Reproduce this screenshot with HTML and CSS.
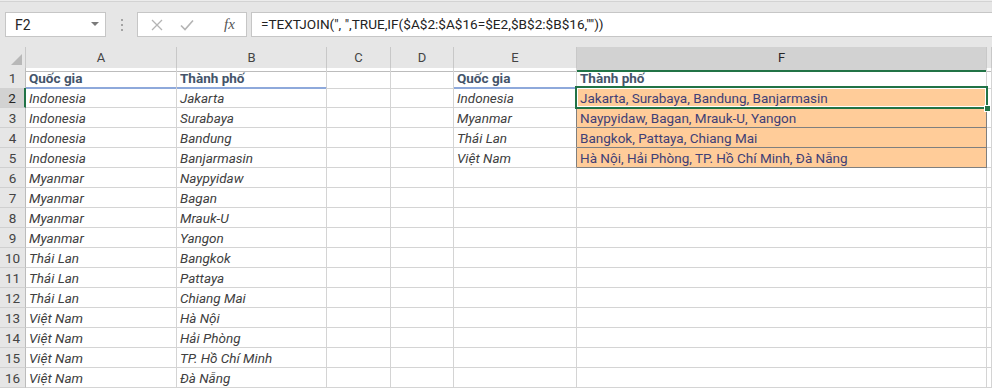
FILE: index.html
```html
<!DOCTYPE html>
<html lang="vi">
<head>
  <meta charset="UTF-8">
  <title>TEXTJOIN - Quốc gia / Thành phố</title>
  <link rel="stylesheet" href="styles.css">
</head>
<body>
  <div class="formula-bar">
    <div class="name-box">
      <span>F2</span>
      <svg class="caret" width="8" height="5" viewBox="0 0 8 5"><path d="M0 0h8L4 4z" fill="#7a7a7a"/></svg>
    </div>
    <div class="grip">
      <svg width="4" height="12" viewBox="0 0 4 12"><rect x="1" y="0" width="2" height="2" fill="#a3a3a3"/><rect x="1" y="5" width="2" height="2" fill="#a3a3a3"/><rect x="1" y="10" width="2" height="2" fill="#a3a3a3"/></svg>
    </div>
    <div class="fx-buttons">
      <svg width="12" height="12" viewBox="0 0 12 12"><path d="M1 1l10 10M11 1L1 11" stroke="#b4b4b4" stroke-width="1.3"/></svg>
      <svg width="14" height="12" viewBox="0 0 14 12"><path d="M1 6.5l4 4L13 1.5" stroke="#b4b4b4" stroke-width="1.6" fill="none"/></svg>
      <span class="fx">fx</span>
    </div>
    <div class="formula">=TEXTJOIN(", ",TRUE,IF($A$2:$A$16=$E2,$B$2:$B$16,""))</div>
  </div>

  <div class="sheet">
    <div class="row head-row">
      <div class="corner">
        <svg width="25" height="20" viewBox="0 0 25 20"><path d="M22 7v11H11z" fill="#b8b8b8"/></svg>
      </div>
      <div class="col-h">A</div>
      <div class="col-h">B</div>
      <div class="col-h">C</div>
      <div class="col-h">D</div>
      <div class="col-h">E</div>
      <div class="col-h active">F</div>
      <div class="col-h"></div>
    </div>

    <div class="row">
      <div class="row-h">1</div>
      <div class="cell heading line">Quốc gia</div>
      <div class="cell heading line">Thành phố</div>
      <div class="cell"></div>
      <div class="cell"></div>
      <div class="cell heading line">Quốc gia</div>
      <div class="cell heading top-input">Thành phố</div>
      <div class="cell"></div>
    </div>

    <div class="row">
      <div class="row-h active">2</div>
      <div class="cell note">Indonesia</div>
      <div class="cell note">Jakarta</div>
      <div class="cell"></div>
      <div class="cell"></div>
      <div class="cell note before-input">Indonesia</div>
      <div class="cell input selected">Jakarta, Surabaya, Bandung, Banjarmasin</div>
      <div class="cell"></div>
    </div>

    <div class="row">
      <div class="row-h">3</div>
      <div class="cell note">Indonesia</div>
      <div class="cell note">Surabaya</div>
      <div class="cell"></div>
      <div class="cell"></div>
      <div class="cell note before-input">Myanmar</div>
      <div class="cell input">Naypyidaw, Bagan, Mrauk-U, Yangon</div>
      <div class="cell"></div>
    </div>

    <div class="row">
      <div class="row-h">4</div>
      <div class="cell note">Indonesia</div>
      <div class="cell note">Bandung</div>
      <div class="cell"></div>
      <div class="cell"></div>
      <div class="cell note before-input">Thái Lan</div>
      <div class="cell input">Bangkok, Pattaya, Chiang Mai</div>
      <div class="cell"></div>
    </div>

    <div class="row">
      <div class="row-h">5</div>
      <div class="cell note">Indonesia</div>
      <div class="cell note">Banjarmasin</div>
      <div class="cell"></div>
      <div class="cell"></div>
      <div class="cell note before-input">Việt Nam</div>
      <div class="cell input">Hà Nội, Hải Phòng, TP. Hồ Chí Minh, Đà Nẵng</div>
      <div class="cell"></div>
    </div>

    <div class="row">
      <div class="row-h">6</div>
      <div class="cell note">Myanmar</div>
      <div class="cell note">Naypyidaw</div>
      <div class="cell"></div><div class="cell"></div><div class="cell"></div><div class="cell"></div><div class="cell"></div>
    </div>
    <div class="row">
      <div class="row-h">7</div>
      <div class="cell note">Myanmar</div>
      <div class="cell note">Bagan</div>
      <div class="cell"></div><div class="cell"></div><div class="cell"></div><div class="cell"></div><div class="cell"></div>
    </div>
    <div class="row">
      <div class="row-h">8</div>
      <div class="cell note">Myanmar</div>
      <div class="cell note">Mrauk-U</div>
      <div class="cell"></div><div class="cell"></div><div class="cell"></div><div class="cell"></div><div class="cell"></div>
    </div>
    <div class="row">
      <div class="row-h">9</div>
      <div class="cell note">Myanmar</div>
      <div class="cell note">Yangon</div>
      <div class="cell"></div><div class="cell"></div><div class="cell"></div><div class="cell"></div><div class="cell"></div>
    </div>
    <div class="row">
      <div class="row-h">10</div>
      <div class="cell note">Thái Lan</div>
      <div class="cell note">Bangkok</div>
      <div class="cell"></div><div class="cell"></div><div class="cell"></div><div class="cell"></div><div class="cell"></div>
    </div>
    <div class="row">
      <div class="row-h">11</div>
      <div class="cell note">Thái Lan</div>
      <div class="cell note">Pattaya</div>
      <div class="cell"></div><div class="cell"></div><div class="cell"></div><div class="cell"></div><div class="cell"></div>
    </div>
    <div class="row">
      <div class="row-h">12</div>
      <div class="cell note">Thái Lan</div>
      <div class="cell note">Chiang Mai</div>
      <div class="cell"></div><div class="cell"></div><div class="cell"></div><div class="cell"></div><div class="cell"></div>
    </div>
    <div class="row">
      <div class="row-h">13</div>
      <div class="cell note">Việt Nam</div>
      <div class="cell note">Hà Nội</div>
      <div class="cell"></div><div class="cell"></div><div class="cell"></div><div class="cell"></div><div class="cell"></div>
    </div>
    <div class="row">
      <div class="row-h">14</div>
      <div class="cell note">Việt Nam</div>
      <div class="cell note">Hải Phòng</div>
      <div class="cell"></div><div class="cell"></div><div class="cell"></div><div class="cell"></div><div class="cell"></div>
    </div>
    <div class="row">
      <div class="row-h">15</div>
      <div class="cell note">Việt Nam</div>
      <div class="cell note">TP. Hồ Chí Minh</div>
      <div class="cell"></div><div class="cell"></div><div class="cell"></div><div class="cell"></div><div class="cell"></div>
    </div>
    <div class="row">
      <div class="row-h">16</div>
      <div class="cell note">Việt Nam</div>
      <div class="cell note">Đà Nẵng</div>
      <div class="cell"></div><div class="cell"></div><div class="cell"></div><div class="cell"></div><div class="cell"></div>
    </div>
  </div>
</body>
</html>
```

FILE: styles.css
```css
body {
  margin: 0;
  background-color: #fff;
  font-family: Roboto, "Liberation Sans", sans-serif;
  overflow: hidden;
}

/* formula bar */
.formula-bar {
  display: flex;
  align-items: flex-start;
  height: 47px;
  box-sizing: border-box;
  padding-top: 12px;
  background: linear-gradient(#ececec 1px, #d3d3d3 1px, #d3d3d3 2px, #e6e6e6 2px);
}
.name-box {
  display: flex;
  align-items: center;
  justify-content: space-between;
  margin-left: 5px;
  width: 101px;
  height: 25px;
  box-sizing: border-box;
  padding: 0 6px 0 9px;
  background-color: #fff;
  border: 1px solid #c6c6c6;
  font-size: 14px;
  color: #262626;
}
.grip {
  width: 31px;
  display: flex;
  justify-content: center;
  padding-top: 7px;
}
.fx-buttons {
  display: flex;
  align-items: center;
  gap: 17px;
  width: 110px;
  height: 25px;
  box-sizing: border-box;
  padding-left: 13px;
  background-color: #fff;
  border: 1px solid #c6c6c6;
}
.fx-buttons svg:nth-child(2) {
  margin-left: 0;
}
.fx {
  margin-left: 13px;
  font-family: "Liberation Serif", serif;
  font-style: italic;
  font-size: 15px;
  color: #555;
}
.formula {
  flex: 1;
  margin-left: 4px;
  height: 25px;
  box-sizing: border-box;
  padding: 0 0 0 9px;
  line-height: 23px;
  background-color: #fff;
  border: 1px solid #c6c6c6;
  border-right: 0;
  font-size: 13.6px;
  color: #222;
  white-space: nowrap;
}

/* grid */
.row {
  display: grid;
  grid-template-columns: 26px 151px 150px 64px 63px 123px 410px 1fr;
  height: 20px;
}
.head-row {
  height: 21px;
  background-color: #e6e6e6;
}
.corner,
.col-h {
  box-sizing: border-box;
  border-right: 1px solid #c8c8c8;
  border-bottom: 1px solid #bcbcbc;
}
.col-h {
  text-align: center;
  font-size: 13px;
  line-height: 21px;
  color: #444;
}
.col-h.active {
  background-color: #d2d2d2;
  border-bottom: 2px solid #217346;
  color: #262626;
}
.row-h {
  box-sizing: border-box;
  padding-top: 2px;
  background-color: #e6e6e6;
  border-right: 1px solid #bcbcbc;
  border-bottom: 1px solid #d0d0d0;
  text-align: center;
  font-size: 13.5px;
  line-height: 17px;
  color: #444;
}
.row-h.active {
  background-color: #d2d2d2;
  border-right: 2px solid #217346;
  color: #262626;
}
.cell {
  box-sizing: border-box;
  padding: 2px 0 0 3px;
  border-right: 1px solid #d4d4d4;
  border-bottom: 1px solid #d4d4d4;
  font-size: 13.5px;
  line-height: 17px;
  white-space: nowrap;
  overflow: visible;
}
.heading {
  font-weight: bold;
  color: #44546a;
}
.line {
  border-bottom: 2px solid #8ea9db;
}
.note {
  font-style: italic;
  color: #404040;
}
.top-input {
  border-bottom-color: #7f7f7f;
}
.before-input {
  border-right-color: #7f7f7f;
}
.input {
  background-color: #ffcc99;
  color: #3f3f76;
  border-right-color: #7f7f7f;
  border-bottom-color: #7f7f7f;
}
.selected {
  position: relative;
}
.selected::after {
  content: "";
  position: absolute;
  left: -2px;
  top: -2px;
  right: -2px;
  bottom: -2px;
  border: 2px solid #217346;
  box-shadow: inset 0 0 0 1px #fff;
}
.selected::before {
  content: "";
  position: absolute;
  right: -5px;
  bottom: -5px;
  width: 5px;
  height: 5px;
  background-color: #217346;
  border: 1px solid #fff;
  z-index: 1;
}
```
